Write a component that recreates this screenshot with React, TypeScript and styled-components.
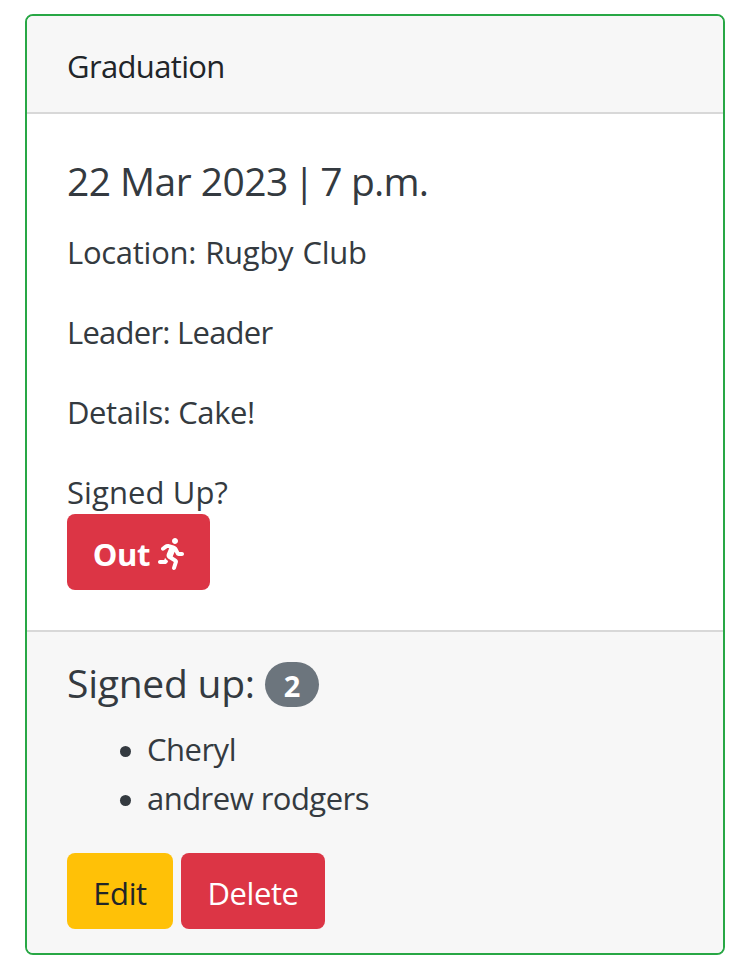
import React from 'react';
import styled, { createGlobalStyle } from 'styled-components';
import { FaRunning } from 'react-icons/fa';

const GlobalStyle = createGlobalStyle`
  *, *::before, *::after { box-sizing: border-box; }
  body {
    margin: 0;
    background: #fff;
    color: #343a40;
    font-family: "Open Sans", "Noto Sans", sans-serif;
    font-size: 31px;
    line-height: 48px;
  }
`;

const Card = styled.article`
  display: flex;
  flex-direction: column;
  width: 700px;
  height: 941px;
  margin: 14px 0 0 25px;
  border: 2px solid #28a745;
  border-radius: 8px;
  overflow: hidden;
  background: #fff;
`;

const Header = styled.header`
  height: 98px;
  padding: 26px 40px 0;
  background: #f7f7f7;
  border-bottom: 2px solid #d8d8d8;
  color: #212529;
`;

const Body = styled.section`
  display: flex;
  flex-direction: column;
  align-items: flex-start;
  height: 516px;
  padding: 42px 40px 0;
`;

const Footer = styled.footer`
  flex: 1;
  padding: 28px 40px 0;
  background: #f7f7f7;
  border-top: 2px solid #d8d8d8;
`;

const Line = styled.span<{ $tracking: number; $wordGap?: number }>`
  display: block;
  letter-spacing: ${p => p.$tracking}px;
  word-spacing: ${p => p.$wordGap ?? 0}px;
  white-space: nowrap;
`;

const When = styled.h5`
  display: flex;
  gap: 5.8px;
  height: 53px;
  margin: 0 0 24px;
  font-size: 39px;
  font-weight: 400;
  line-height: 50px;
  letter-spacing: -0.55px;
  white-space: nowrap;
`;

const Time = styled.span`
  letter-spacing: -0.8px;
`;

const Detail = styled.p`
  margin: 0 0 32px;
`;

const Details = styled.div`
  margin-top: -5px;
`;

const Prompt = styled.div`
  height: 46px;
`;

const Button = styled.button<{ $tone: 'danger' | 'warning'; $width: number; $bold?: boolean }>`
  display: inline-flex;
  align-items: center;
  justify-content: center;
  gap: 5px;
  width: ${p => p.$width}px;
  height: 76px;
  padding: ${p => (p.$bold ? '4px 0 0 3px' : '3px 0 0')};
  border: 0;
  border-radius: 8px;
  background: ${p => (p.$tone === 'danger' ? '#dc3545' : '#ffc107')};
  color: ${p => (p.$tone === 'danger' ? '#fff' : '#212529')};
  font-family: inherit;
  font-size: 31px;
  font-weight: ${p => (p.$bold ? 700 : 400)};
  letter-spacing: -0.4px;
`;

const Summary = styled.h5`
  display: flex;
  align-items: center;
  height: 48px;
  margin: 0;
  font-size: 39px;
  font-weight: 400;
`;

const SummaryLabel = styled.span`
  width: 198px;
  height: 50px;
  letter-spacing: -0.25px;
`;

const Badge = styled.span`
  width: 54px;
  height: 45px;
  border-radius: 23px;
  background: #6c757d;
  color: #fff;
  font-size: 29px;
  font-weight: 700;
  line-height: 47px;
  text-align: center;
`;

const Attendees = styled.ul`
  height: 98px;
  margin: 17px 0 30px;
  padding: 0 0 0 53px;
  list-style: none;
`;

const Attendee = styled.li`
  display: flex;
  gap: 16px;
  height: 49px;

  &::before {
    content: "";
    width: 11px;
    height: 11px;
    margin-top: 21px;
    border-radius: 50%;
    background: #343a40;
  }
`;

const Actions = styled.div`
  display: flex;
  gap: 8px;
`;

export default function App() {
  return (
    <>
      <GlobalStyle />
      <Card>
        <Header><Line $tracking={-0.65}>Graduation</Line></Header>
        <Body>
          <When><span>22 Mar 2023</span><span>|</span><Time>7 p.m.</Time></When>
          <Details>
            <Detail><Line $tracking={-0.27} $wordGap={1.3}>Location: Rugby Club</Line></Detail>
            <Detail><Line $tracking={-0.75}>Leader: Leader</Line></Detail>
            <Detail><Line $tracking={-0.4}>Details: Cake!</Line></Detail>
          </Details>
          <Prompt><Line $tracking={0.1}>Signed Up?</Line></Prompt>
          <Button $tone="danger" $width={143} $bold>Out <FaRunning size={32} /></Button>
        </Body>
        <Footer>
          <Summary><SummaryLabel>Signed up:</SummaryLabel><Badge>2</Badge></Summary>
          <Attendees>
            <Attendee><Line $tracking={-0.5}>Cheryl</Line></Attendee>
            <Attendee><Line $tracking={-0.53}>andrew rodgers</Line></Attendee>
          </Attendees>
          <Actions>
            <Button $tone="warning" $width={106}>Edit</Button>
            <Button $tone="danger" $width={144}>Delete</Button>
          </Actions>
        </Footer>
      </Card>
    </>
  );
}
